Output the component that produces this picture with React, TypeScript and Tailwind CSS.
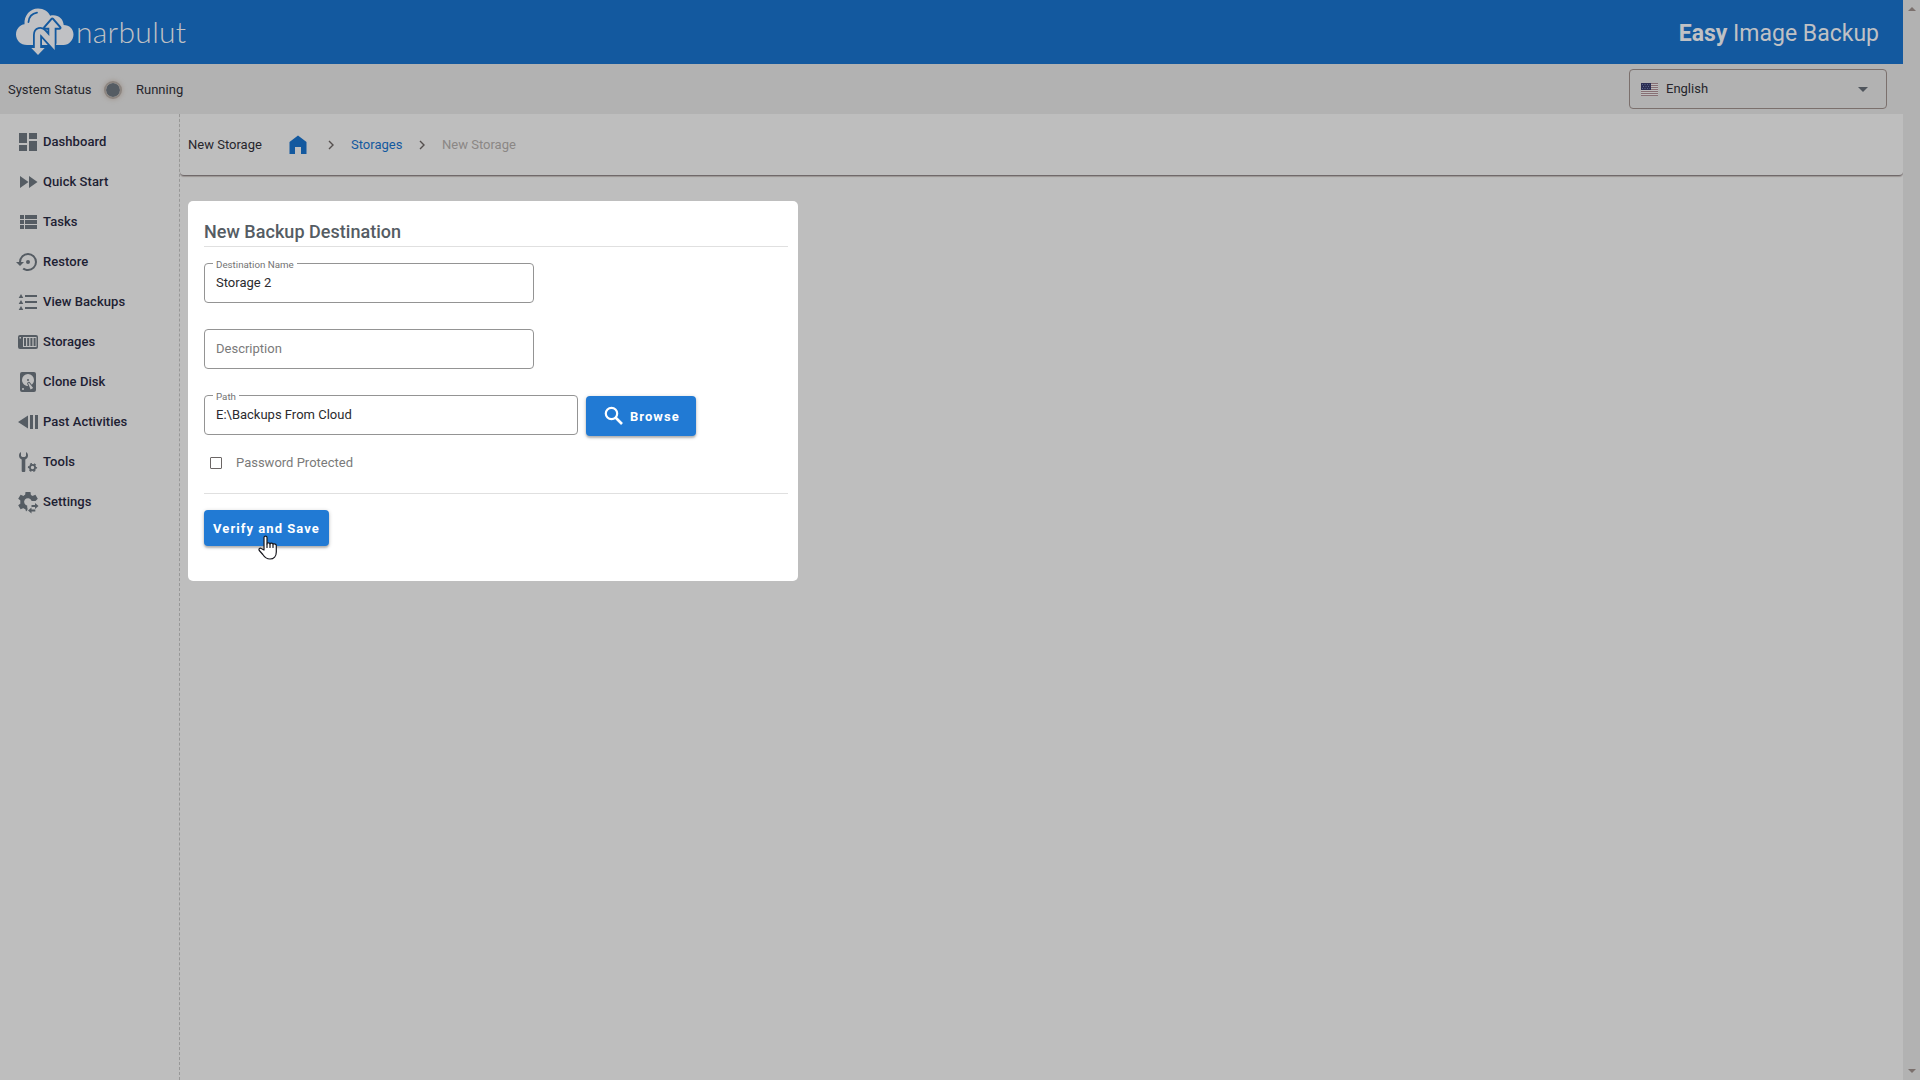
import type { ReactNode } from 'react'
import { clsx } from 'clsx'

const HARDDISK =
  'M6,2H18A2,2 0 0,1 20,4V20A2,2 0 0,1 18,22H6A2,2 0 0,1 4,20V4A2,2 0 0,1 6,2M12,4A6,6 0 0,0 6,10C6,13.31 8.69,16 12.1,16L11.22,13.77C10.95,13.29 11.11,12.68 11.59,12.4L12.45,11.9C12.93,11.63 13.54,11.79 13.82,12.27L15.74,14.69C17.12,13.59 18,11.9 18,10A6,6 0 0,0 12,4M12,9A1,1 0 0,1 13,10A1,1 0 0,1 12,11A1,1 0 0,1 11,10A1,1 0 0,1 12,9M7,18A1,1 0 0,0 6,19A1,1 0 0,0 7,20A1,1 0 0,0 8,19A1,1 0 0,0 7,18M12.09,13.27L14.58,19.58L17.17,18.08L12.95,12.77L12.09,13.27Z'

const BACKUP_RESTORE =
  'M12,3A9,9 0 0,0 3,12H0L4,16L8,12H5A7,7 0 0,1 12,5A7,7 0 0,1 19,12A7,7 0 0,1 12,19C10.5,19 9.09,18.5 7.94,17.7L6.5,19.14C8.04,20.3 9.94,21 12,21A9,9 0 0,0 21,12A9,9 0 0,0 12,3M14,12A2,2 0 0,0 12,10A2,2 0 0,0 10,12A2,2 0 0,0 12,14A2,2 0 0,0 14,12Z'

const MENU: { label: string; icon: ReactNode }[] = [
  {
    label: 'Dashboard',
    icon: <path d="M13 3v6h8V3M13 21h8V11h-8M3 21h8v-6H3M3 13h8V3H3v10z" />,
  },
  {
    label: 'Quick Start',
    icon: <path d="M13 6v12l8.5-6M4 18l8.5-6L4 6v12z" />,
  },
  {
    label: 'Tasks',
    icon: <path d="M9 5v4h12V5M9 19h12v-4H9M9 14h12v-4H9M4 9h4V5H4M4 19h4v-4H4M4 14h4v-4H4v4z" />,
  },
  { label: 'Restore', icon: <path d={BACKUP_RESTORE} /> },
  {
    label: 'View Backups',
    icon: (
      <path d="M9 5h12v2H9zM9 11h12v2H9zM9 17h12v2H9zM5 4l2.3 4H2.7zM5 10l2.3 4H2.7zM5 16l2.3 4H2.7z" />
    ),
  },
  {
    label: 'Storages',
    icon: (
      <path
        fillRule="evenodd"
        d="M4 5h16a2 2 0 0 1 2 2v10a2 2 0 0 1-2 2H4a2 2 0 0 1-2-2V7a2 2 0 0 1 2-2zM3.5 7v1.5H5V7zM7 7v10h13.500V7zM8 8h2v8H8zM11.200 8h2v8h-2zM14.400 8h2v8h-2zM17.600 8h2v8h-2z"
      />
    ),
  },
  { label: 'Clone Disk', icon: <path d={HARDDISK} /> },
  {
    label: 'Past Activities',
    icon: <path d="M12 5.500v13L2 12zM14 5h3v14h-3zM19 5h3v14h-3z" />,
  },
  {
    label: 'Tools',
    icon: (
      <>
        <path d="M5 2v4l1.300 1h2.400L10 6V2c1.400.8 2 2 2 3.500 0 1.900-1 3.200-2.700 3.900V21a1 1 0 0 1-1 1H6.700a1 1 0 0 1-1-1V9.400C4 8.700 3 7.400 3 5.500 3 4 3.600 2.800 5 2z" />
        <circle cx="16.500" cy="17.500" r="2.600" fill="none" stroke="currentColor" strokeWidth="1.800" />
        <circle
          cx="16.500"
          cy="17.500"
          r="3.900"
          fill="none"
          stroke="currentColor"
          strokeWidth="1.400"
          strokeDasharray="2.042 2.042"
          strokeDashoffset="1"
        />
      </>
    ),
  },
  {
    label: 'Settings',
    icon: (
      <>
        <path
          d="M17.200 9.800A5.700 5.700 0 1 0 11 17.600"
          fill="none"
          stroke="currentColor"
          strokeWidth="3.800"
        />
        <path d="M9.500 2h5l.5 4H9zM2.200 8.800l2.400-4.100 3.600 1.500-3 4.900zM21.800 8.800l-2.400-4.100-3.600 1.500-.3 4.900h4zM2.200 15.200l2.400 4.100 3.600-1.500-3-4.900zM9 17.500h2.500V20L10 21.500z" />
        <path d="M22.500 16l-3.500-3v2h-3.500v2H19v2zM12 20.500l3.500-3v2h3.800v2h-3.800v2z" />
      </>
    ),
  },
]

function Logo() {
  const ribbon = 'M21.500 49V35c0-4 3.500-4.500 5.500-2L36 43V27'
  return (
    <div className="flex h-full items-start pl-4">
      <svg width="58" height="64" viewBox="0 0 58 64" className="shrink-0">
        <path
          d="M11 45C4.500 45 0 40.200 0 34.500c0-5.500 4-9.700 8.500-10.200C8 15.500 14 8.500 22 8.500c6 0 10 3 12.200 7.200 7-1.800 13 2.500 13.500 9.300C53.500 25 57.500 29 57.500 34.500S53 45 47.500 45z"
          fill="#c0c1c4"
        />
        <path
          d="M12.500 22c.5-5 3.500-8.500 8.500-9.300"
          fill="none"
          stroke="#13599f"
          strokeWidth="1.800"
          strokeLinecap="round"
        />
        <g fill="none" stroke="#13599f" strokeLinejoin="round">
          <path d={ribbon} strokeWidth="9" />
          <path d="M36.300 19.500l7.200 8.300H29.100z" strokeWidth="4" />
        </g>
        <path d={ribbon} fill="none" stroke="#c0c1c4" strokeWidth="5.400" />
        <path d="M36.300 19.500l7.200 8.300H29.100zM15.300 48h13.400L22 54.900z" fill="#c0c1c4" />
      </svg>
      <span className="ml-[2px] mt-[11px] font-['Lato',sans-serif] text-[30px] font-light leading-10 tracking-[0.300px] text-[#c0c1c4]">
        narbulut
      </span>
    </div>
  )
}

function Flag() {
  return (
    <svg width="17" height="13" viewBox="0 0 17 13">
      <rect width="17" height="13" fill="#bdbdbd" />
      {[0, 2, 4, 6, 8, 10, 12].map((y) => (
        <rect key={y} y={y} width="17" height="1" fill="#876f74" />
      ))}
      <rect width="10" height="7" fill="#2c2e52" />
      <path d="M1 1.500h8M2 3.500h7M1 5.500h8" stroke="#6b7ba3" strokeDasharray="1 1.500" strokeWidth=".7" />
    </svg>
  )
}

function Field({
  label,
  value,
  className,
}: {
  label: string
  value?: string
  className?: string
}) {
  return (
    <fieldset
      className={clsx(
        'relative flex h-10 items-center rounded-[4px] border border-[#949494] px-[11px] text-[13px]',
        className,
      )}
    >
      {value ? (
        <>
          <span className="absolute -top-1.5 left-2 bg-white px-[3px] text-[9.75px] leading-[14px] text-[#737373]">
            {label}
          </span>
          <span className="text-[#2b2b2e]">{value}</span>
        </>
      ) : (
        <span className="text-[#7a7a7a]">{label}</span>
      )}
    </fieldset>
  )
}

function Chevron() {
  return (
    <svg width="6" height="10" viewBox="0 0 6 10" fill="none" stroke="#55504f" strokeWidth="1.400">
      <path d="M1 1l4 4-4 4" />
    </svg>
  )
}

function Cursor() {
  return (
    <svg
      width="20"
      height="25"
      viewBox="0 0 20 25"
      className="absolute left-[54px] top-[25px]"
      fill="#fff"
      stroke="#16161d"
      strokeWidth="1.200"
      strokeLinejoin="round"
      strokeLinecap="round"
    >
      <path d="M6 15V2.500C6 .6 9 .6 9 2.500V9c0-1.600 3-1.600 3 .2 0-1.500 3-1.300 3 .4 0-1.300 3.300-1.100 3.300 1V17c0 4-2.500 7-6.300 7-3.500 0-5.300-1.500-7.200-4.500L1.300 15.500c-1-1.700.7-2.900 2-2z" />
      <path d="M9 9v3.500M12 9.500v3M15 10v2.500" />
    </svg>
  )
}

export default function App() {
  return (
    <div className="flex h-[1080px] w-[1920px] overflow-hidden bg-[#bebebe] font-['Roboto',sans-serif] text-[13px] text-[#26262c]">
      <div className="flex flex-1 flex-col">
        <header className="flex h-16 shrink-0 justify-between bg-[#13599f]">
          <Logo />
          <h1 className="pr-6 pt-[2px] text-[23px] leading-[64px] text-[#c0c1c4]">
            <b className="font-bold">Easy</b> Image Backup
          </h1>
        </header>

        <div className="flex h-[50px] shrink-0 items-center justify-between bg-[#b2b2b2] pl-2 pr-4">
          <div className="flex items-center pt-px">
            <span className="w-[96px]">System Status</span>
            <span className="mr-[14px] size-[18px] rounded-full border-2 border-[#8c8580] bg-[#555c63] bg-clip-padding shadow-[0_0_4px_1px_#a39b95]" />
            <span>Running</span>
          </div>
          <div className="flex h-10 w-[258px] items-center rounded-[4px] border border-[#7b706d] pl-[11px] pr-[18px]">
            <Flag />
            <span className="ml-2 flex-1">English</span>
            <svg width="10" height="5" viewBox="0 0 10 5">
              <path d="M0 0h10L5 5z" fill="#4f555c" />
            </svg>
          </div>
        </div>

        <div className="flex flex-1">
          <nav className="w-[180px] shrink-0 border-r border-dashed border-[#989898] pt-2">
            {MENU.map(({ label, icon }) => (
              <a key={label} className="flex h-10 items-center gap-[3px] pl-4 font-medium tracking-[0.05px] text-[#1d2133]">
                <svg width="24" height="24" viewBox="0 0 24 24" className="text-[#555c63]" fill="currentColor">
                  {icon}
                </svg>
                {label}
              </a>
            ))}
          </nav>

          <main className="flex-1">
            <div className="flex h-[62px] items-center rounded-b-[4px] border-b border-[#70696a] pl-2 shadow-[0_1px_1px_#9b9593]">
              <span className="w-[100px]">New Storage</span>
              <svg width="20" height="20" viewBox="0 0 20 20" fill="#13599f">
                <path d="M1.500 7L10 .5 18.500 7v12h-5.500v-7H7v7H1.500z" />
              </svg>
              <span className="ml-5 mr-[17px]">
                <Chevron />
              </span>
              <span className="w-[51px] text-[#13599f]">Storages</span>
              <span className="mx-[17px]">
                <Chevron />
              </span>
              <span className="text-[#8b8785]">New Storage</span>
            </div>

            <section className="ml-2 mt-[25px] h-[380px] w-[610px] rounded-[5px] bg-white pl-4 pr-[10px] pt-[17px]">
              <h2 className="h-[29px] border-b border-[#e0e0e0] text-[18px] font-medium leading-7 tracking-[0.03px] text-[#555c63]">
                New Backup Destination
              </h2>
              <Field label="Destination Name" value="Storage 2" className="mt-4 w-[330px]" />
              <Field label="Description" className="mt-[26px] w-[330px]" />
              <div className="mt-[26px] flex gap-2">
                <Field label="Path" value="E:\Backups From Cloud" className="w-[374px]" />
                <button className="mt-px flex h-10 w-[110px] items-center rounded-[4px] bg-[#217ad4] pl-[18px] text-[13px] font-bold tracking-[1.050px] text-white shadow-[0_2px_2px_#0003,0_1px_4px_#0003]">
                  <svg width="20" height="20" viewBox="0 0 20 20" fill="none" stroke="#fff" strokeWidth="2.200" className="mr-1.5">
                    <circle cx="7.500" cy="7.500" r="5.700" />
                    <path d="M11.500 11.500l6.500 6.500" strokeWidth="2.600" />
                  </svg>
                  <span className="pt-0.5">Browse</span>
                </button>
              </div>
              <label className="mt-[17px] flex h-5 items-center pl-1.5 text-[#7a7a7a]">
                <span className="mr-[14px] size-3 rounded-[1px] border-[1.500px] border-[#6b6665]" />
                Password Protected
              </label>
              <div className="relative mt-[20px] border-t border-[#e0e0e0] pt-4">
                <button className="h-9 w-[125px] whitespace-nowrap rounded-[4px] bg-[#217ad4] pt-0.5 text-[13px] font-bold tracking-[1.050px] text-white shadow-[0_2px_2px_#0003,0_1px_4px_#0003]">
                  Verify and Save
                </button>
                <div className="absolute left-0 top-4">
                  <Cursor />
                </div>
              </div>
            </section>
          </main>
        </div>
      </div>

      <aside className="flex w-[17px] flex-col items-center justify-between bg-[#b2b2b2] pb-[7px] pt-[7px]">
        <svg width="8" height="4" viewBox="0 0 8 4" fill="#7b706d">
          <path d="M0 4h8L4 0z" />
        </svg>
        <svg width="8" height="4" viewBox="0 0 8 4" fill="#7b706d">
          <path d="M0 0h8L4 4z" />
        </svg>
      </aside>
    </div>
  )
}
